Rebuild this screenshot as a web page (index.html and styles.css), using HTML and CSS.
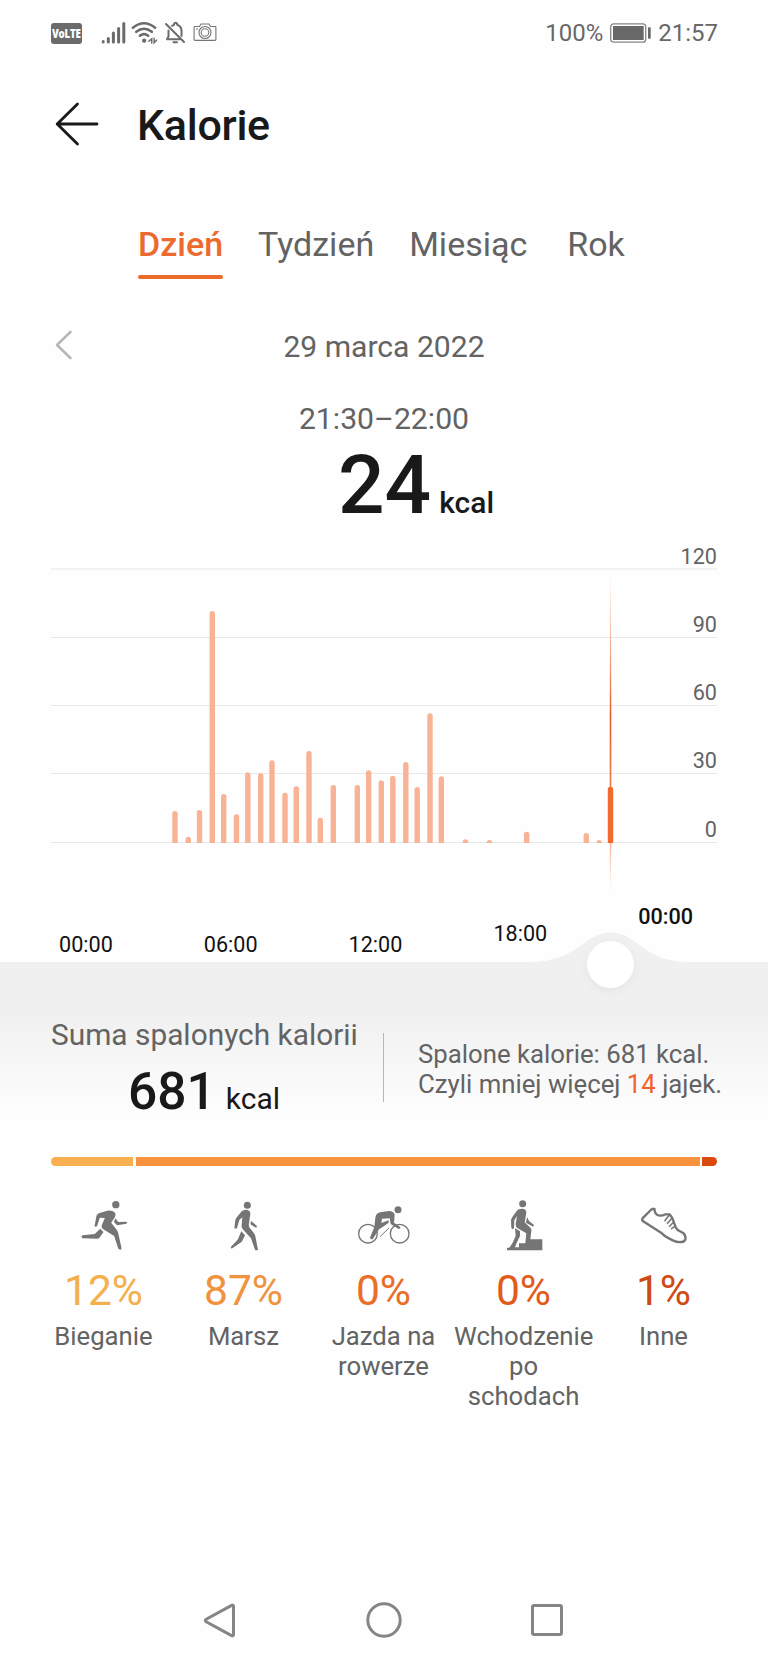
FILE: index.html
```html
<!DOCTYPE html>
<html lang="pl">
<head>
<meta charset="utf-8">
<title>Kalorie</title>
<link rel="stylesheet" href="styles.css">
</head>
<body>
<div class="status">
  <div class="status-left">
    <span class="volte"><b>VoLTE</b></span>
    <svg class="signal" width="25" height="24" viewBox="0 0 25 24" stroke="#6b6b6b" stroke-width="3" stroke-linecap="round"><path d="M2.2 20.5v.6M7.3 17.5v3.6M12.4 12v9.1M17.6 7.5v13.6M22.8 2.5v18.6"/></svg>
    <svg class="wifi" width="27" height="24" viewBox="0 0 28 24" fill="none" stroke="#6b6b6b" stroke-width="2.600" stroke-linecap="round"><path d="M2 6.6Q13.500-2.800 25 6.600M5.500 10.800Q13.500 4.300 21.500 10.800M9.200 14.900Q13.500 11.400 17.800 14.900"/><circle cx="13.600" cy="20" r="2.200" fill="#6b6b6b" stroke="none"/><path d="M18.500 20.600l3-2.600v4.500M24 17.500v4.500l2.500-2.600" stroke-width="1.500"/></svg>
    <svg class="bell" width="22" height="24" viewBox="0 0 22 24" fill="none" stroke="#6b6b6b" stroke-width="2" stroke-linecap="round" stroke-linejoin="round"><path d="M2 3l18 18M4.500 9.500v6L3 18.200h12.500M8 4.800l2-1c.3-2.600 3-2.600 3.300 0 3 1.200 4.200 3.200 4.200 6v5.200M9.500 21.300h3.500"/></svg>
    <svg class="camera" width="24" height="20" viewBox="0 0 24 20" fill="none" stroke="#757575" stroke-width="1.100"><path d="M2 3.500h4.500l1.500-2.500h8l1.500 2.500H22q.9 0 .9.900V16.500q0 .9-.9.900H2q-.9 0-.9-.9V4.400q0-.9.9-.9z"/><circle cx="12" cy="9.500" r="6"/><circle cx="12" cy="9.500" r="3.800"/><path d="M3 6h2"/></svg>
  </div>
  <div class="status-right">
    <span>100%</span>
    <svg width="41" height="20" viewBox="0 0 41 20"><rect x=".7" y=".8" width="35" height="18.400" rx="3" fill="#fff" stroke="#858585" stroke-width="1.300"/><rect x="3" y="3" width="30.700" height="14" fill="#686868"/><rect x="38" y="4.300" width="2.700" height="11.400" rx=".8" fill="#686868"/></svg>
    <span>21:57</span>
  </div>
</div>

<header class="header">
  <svg width="44" height="44" viewBox="0 0 44 44" fill="none" stroke="#191919" stroke-width="2.800" stroke-linecap="round" stroke-linejoin="round"><path d="M22.500 2L2.200 22l20.300 20M2.200 22H42"/></svg>
  <h1>Kalorie</h1>
</header>

<nav class="tabs">
  <span class="tab active">Dzień</span><span class="tab">Tydzień</span><span class="tab">Miesiąc</span><span class="tab">Rok</span>
</nav>

<div class="date">
  <svg width="18" height="30" viewBox="0 0 18 30" fill="none" stroke="#b5b5b5" stroke-width="2.500" stroke-linecap="round" stroke-linejoin="round"><path d="M15.500 1.800L2 15l13.500 13.200"/></svg>
  <span>29 marca 2022</span>
</div>
<div class="range">21:30–22:00</div>
<div class="value"><strong>24</strong><span>kcal</span></div>

<section class="chart">
  <div class="grid">
    <div class="line">120</div><div class="line">90</div><div class="line">60</div><div class="line">30</div><div class="line">0</div>
  </div>
  <svg class="bars" width="768" height="385" viewBox="0 515 768 385">
    <defs><linearGradient id="cursor" x1="0" y1="0" x2="0" y2="1">
      <stop offset="0" stop-color="#e8703c" stop-opacity="0"/><stop offset=".25" stop-color="#e8703c" stop-opacity=".6"/><stop offset=".45" stop-color="#e35f28"/><stop offset=".8" stop-color="#f07a4a" stop-opacity=".9"/><stop offset=".86" stop-color="#f07a4a" stop-opacity=".5"/><stop offset="1" stop-color="#f07a4a" stop-opacity="0"/>
    </linearGradient></defs>
    <path fill="url(#cursor)" d="M610.200 572h.6L611.300 715V843L610.800 892h-.6L609.700 843V715z"/>
    <g id="bars"></g>
  </svg>
</section>

<div class="axis"><span>00:00</span><span>06:00</span><span>12:00</span><span class="near">18:00</span><span class="raised">00:00</span></div>

<section class="panel">
  <svg class="wave" width="180" height="76" viewBox="0 0 180 76"><path fill="#f0f0f0" d="M10 31C58 31 64 1.500 90.700 1.500S122 31 170 31V32H10z"/></svg>
  <div class="knob"></div>
  <div class="total">
    <div class="total-label">Suma spalonych kalorii</div>
    <div class="total-value"><strong>681</strong><span>kcal</span></div>
  </div>
  <div class="divider"></div>
  <p class="equiv">Spalone kalorie: 681 kcal.<br>Czyli mniej więcej <em>14</em> jajek.</p>
</section>

<div class="split"><i class="s-run"></i><i class="s-walk"></i><i class="s-other"></i></div>

<section class="activities">
  <div class="activity run">
    <svg viewBox="115.500 56 150 156"><circle cx="226" cy="73" r="11"/><path d="M162 138L168 106Q170 101 175 99L200 91Q214 88 222 96Q228 102 222 112L212 127L229 149Q232 153 233 158L243 203Q243 208 239 208Q235 208 233 204L221 167L187 146Q181 141 184 134L193 113L178 112L170 136Q167 141 162 138zM225 114L233 125L258 124Q262 128 257 130L230 135L220 125zM179 145L189 155L177 172Q174 175 169 175L126 174Q120 169 126 165L163 161z"/></svg>
    <b>12%</b><span>Bieganie</span>
  </div>
  <div class="activity walk">
    <svg viewBox="534 56 150 156"><circle cx="619" cy="75" r="10.500"/><path d="M580 143L583 120Q585 113 590 108L602 93Q609 87 620 89Q629 92 628 101L624 129Q622 135 626 142L639 159Q642 163 643 168L651 208Q647 212 642 208L630 174L605 146Q601 141 602 134L604 111L595 119L588 143Q584 147 580 143zM630 122L647 136Q649 140 645 142L628 132zM601 153L612 165L604 181Q602 185 598 187L574 204Q568 205 570 199L590 178z"/></svg>
    <b>87%</b><span>Marsz</span>
  </div>
  <div class="activity bike">
    <svg viewBox="954 56 150 156"><circle cx="1071" cy="88" r="10.500"/><g fill="none" stroke="#757575" stroke-width="4"><circle cx="981" cy="160" r="28"/><circle cx="1076" cy="160" r="28"/><path d="M1017 169L1044 143" stroke-width="3"/></g><path d="M1003 112Q1005 99 1017 96L1044 92Q1058 92 1061 103L1059 127L1078 140Q1080 145 1073 146L1049 131L1046 114L1023 115L1021 128L1043 120V127L1026 139L1014 147L996 175Q990 180 987 172L1000 140z"/></svg>
    <b>0%</b><span>Jazda na rowerze</span>
  </div>
  <div class="activity stairs">
    <svg viewBox="294 56 150 156"><circle cx="365" cy="70" r="10.500"/><path d="M331 143L330 120Q331 115 334 110L347 92Q352 84 366 85Q376 87 376 97L371 126L389 143Q392 147 391 151L388 177H424V210H318V202H325L335 187L344 166L342 144L357 153L357 167L347 188L342 201H354V189H373L376 159L350 144Q343 139 344 130L348 107L340 120L339 143Q335 149 331 143zM378 110L384 122L399 134Q399 139 394 138L375 127z"/></svg>
    <b>0%</b><span>Wchodzenie po schodach</span>
  </div>
  <div class="activity other">
    <svg viewBox="715.500 56 150 156"><g fill="none" stroke="#757575" stroke-linecap="round" stroke-linejoin="round" stroke-width="7"><path d="M726 114L754 86L762 86Q762 104 777 106Q789 106 794 102L807 102L815 112L826 142Q830 149 837 152L848 158Q856 165 855 175Q853 185 842 185Q829 186 817 180Q795 170 784 159L728 123Q723 119 726 114z"/><path stroke-width="4.500" d="M807 103L793 121M814 114L801 129M819 126L807 138M823 138L813 145"/></g></svg>
    <b>1%</b><span>Inne</span>
  </div>
</section>

<footer class="navbar">
  <svg width="36" height="38" viewBox="0 0 36 38"><path d="M4.200 18.300Q2.400 19.500 4.200 20.700L29.600 34.600Q31.500 35.500 31.500 33.500V5.500Q31.500 3.500 29.600 4.400z"/></svg>
  <svg width="38" height="38" viewBox="0 0 38 38"><circle cx="19" cy="19" r="16.200"/></svg>
  <svg width="34" height="34" viewBox="0 0 34 34"><rect x="2.500" y="2.500" width="29" height="29" rx="1.500"/></svg>
</footer>
<script src="chart.js"></script>
</body>
</html>
```
FILE: styles.css
```css
* { box-sizing: border-box; }
body { margin: 0; width: 768px; height: 1664px; overflow: hidden; background: #fefefe; color: #636363; font-family: Roboto, sans-serif; }
svg { display: block; flex: none; }
.status { height: 66px; padding: 0 50px 0 51px; display: flex; justify-content: space-between; align-items: center; font-size: 24px; color: #686868; }
.status-left, .status-right { display: flex; align-items: center; }
.status-right { gap: 7px; }
.volte { width: 31px; height: 21px; border-radius: 3px; background: #6b6b6b; color: #fff; display: flex; align-items: center; justify-content: center; font: 700 12.500px "Open Sans", sans-serif; letter-spacing: -.3px; }
.volte b { transform: scaleX(.78); font-weight: 800; }
.signal { margin-left: 19px; }
.wifi { margin-left: 5px; }
.bell { margin-left: 6px; }
.camera { margin-left: 7px; }
.header { height: 119px; padding-left: 55px; display: flex; align-items: center; }
.header svg { margin-top: -4px; }
h1 { margin: -2px 0 0 38px; font-size: 43px; font-weight: 500; color: #191919; letter-spacing: -.3px; }
.tabs { height: 127px; padding: 39px 0 0 138px; display: flex; align-items: flex-start; font-size: 34px; line-height: 40px; }
.tab + .tab { margin-left: 35px; }
.tab:last-child { margin-left: 40px; }
.active { font-weight: 500; color: #ed6a2d; }
.active::after { content: ""; display: block; height: 4px; margin-top: 11px; border-radius: 3px; background: #ed6a2d; }
.date { height: 69px; padding: 0 55px; display: grid; grid-template-columns: 18px 1fr 18px; align-items: center; text-align: center; font-size: 30.100px; }
.date svg { margin-top: -3px; }
.range { height: 75px; line-height: 75px; text-align: center; font-size: 30.200px; }
.value { height: 59px; padding-left: 338px; display: flex; align-items: baseline; line-height: 59px; color: #191919; }
.value strong { font-size: 82px; font-weight: 500; }
.value span { margin-left: 8px; font-size: 30px; font-weight: 500; }
.chart { position: relative; height: 328px; }
.grid { padding: 0 51px; }
.line { height: 68.300px; border-bottom: 1px solid #e9e9e9; display: flex; align-items: flex-end; justify-content: flex-end; font-size: 21.600px; line-height: 25px; }
.line:first-child { height: 55px; border-bottom: 2px solid #f2f2f2; line-height: 23px; }
.line:nth-child(2), .line:nth-child(3) { height: 68px; }
.bars { position: absolute; left: 0; top: 0; }
.axis { height: 119px; padding: 0 75px 5px 59px; display: flex; justify-content: space-between; align-items: flex-end; font-size: 21.600px; line-height: 24px; color: #111; }
.near { margin-bottom: 11px; }
.raised { margin-bottom: 28px; font-weight: 500; }
.panel { position: relative; height: 165px; padding-left: 51px; display: flex; background: linear-gradient(#f0f0f0 0, #f0f0f0 50px, #fefefe 155px); }
.wave { position: absolute; left: 520px; top: -31px; }
.knob { position: absolute; left: 587px; top: -21px; width: 47px; height: 47px; border-radius: 50%; background: #fff; box-shadow: 0 3px 10px rgba(0, 0, 0, .05); }
.total { width: 306px; padding-top: 53px; }
.total-label { font-size: 29.850px; line-height: 40px; white-space: nowrap; }
.total-value { display: flex; align-items: baseline; justify-content: center; line-height: 73px; color: #191919; }
.total-value strong { font-size: 51.500px; font-weight: 500; }
.total-value span { margin-left: 10px; font-size: 30px; }
.divider { margin: 71px 34px 0 26px; width: 1px; height: 69px; background: #b7b7b7; }
.equiv { margin: 77px 0 0; font-size: 25.750px; line-height: 30px; white-space: nowrap; }
.equiv em { font-style: normal; color: #f0642a; }
.split { margin: 29.500px 51px 0; height: 9px; display: flex; gap: 2.500px; border-radius: 5px; overflow: hidden; }
.s-run { width: 82px; background: #fbb050; }
.s-walk { flex: 1; background: #f8923c; }
.s-other { width: 15px; background: #db490c; }
.activities { margin: 33px 33px 0 33.500px; height: 384px; display: grid; grid-template-columns: repeat(5, 140px); }
.activity { display: flex; flex-direction: column; align-items: center; text-align: center; }
.activity svg { width: 50px; height: 52px; overflow: visible; fill: #757575; }
.activity b { margin-top: 16px; font-size: 42.600px; font-weight: 400; line-height: 47px; }
.activity span { margin-top: 7px; font-size: 25.700px; line-height: 30px; max-width: 141px; }
.bike span { width: 110px; }
.stairs span { width: 139px; }
.run b { color: #f5b04e; }
.walk b { color: #f09340; }
.bike b { color: #ea6d28; }
.stairs b { color: #e25a1a; }
.other b { color: #cf4b14; }
.navbar { height: 74px; padding: 0 204px 0 202px; display: flex; align-items: center; justify-content: space-between; }
.navbar svg { fill: none; stroke: #858585; stroke-width: 3px; }
```
FILE: chart.js
```js
// Half-hour bars: [centre x, top y]; the last one is selected.
const bars = [
  [175, 811], [188.3, 836.7], [199.5, 810], [212.3, 611], [223.7, 794], [236.5, 814.3],
  [247.8, 772.3], [260.7, 773.3], [272, 760.3], [285, 792.7], [296.3, 786.3], [309, 751],
  [320.3, 817.7], [333.3, 785], [357.3, 785], [368.7, 770.3], [381.3, 780.3], [392.8, 775.7],
  [405.8, 762], [417.2, 787], [430, 713.3], [441.3, 776.3], [465.5, 839.3], [489.5, 840],
  [526.7, 831.7], [586.3, 833], [599.2, 840], [610.5, 786.7]
];
const base = 843;
document.getElementById("bars").innerHTML = bars.map(([x, y], i) => {
  const r = Math.min(2.7, base - y);
  return `<path fill="${i === bars.length - 1 ? "#f26a2c" : "#f8b396"}" d="M${x - 2.7} ${base}V${y + r}a2.7 ${r} 0 0 1 5.4 0V${base}z"/>`;
}).join("");
```
